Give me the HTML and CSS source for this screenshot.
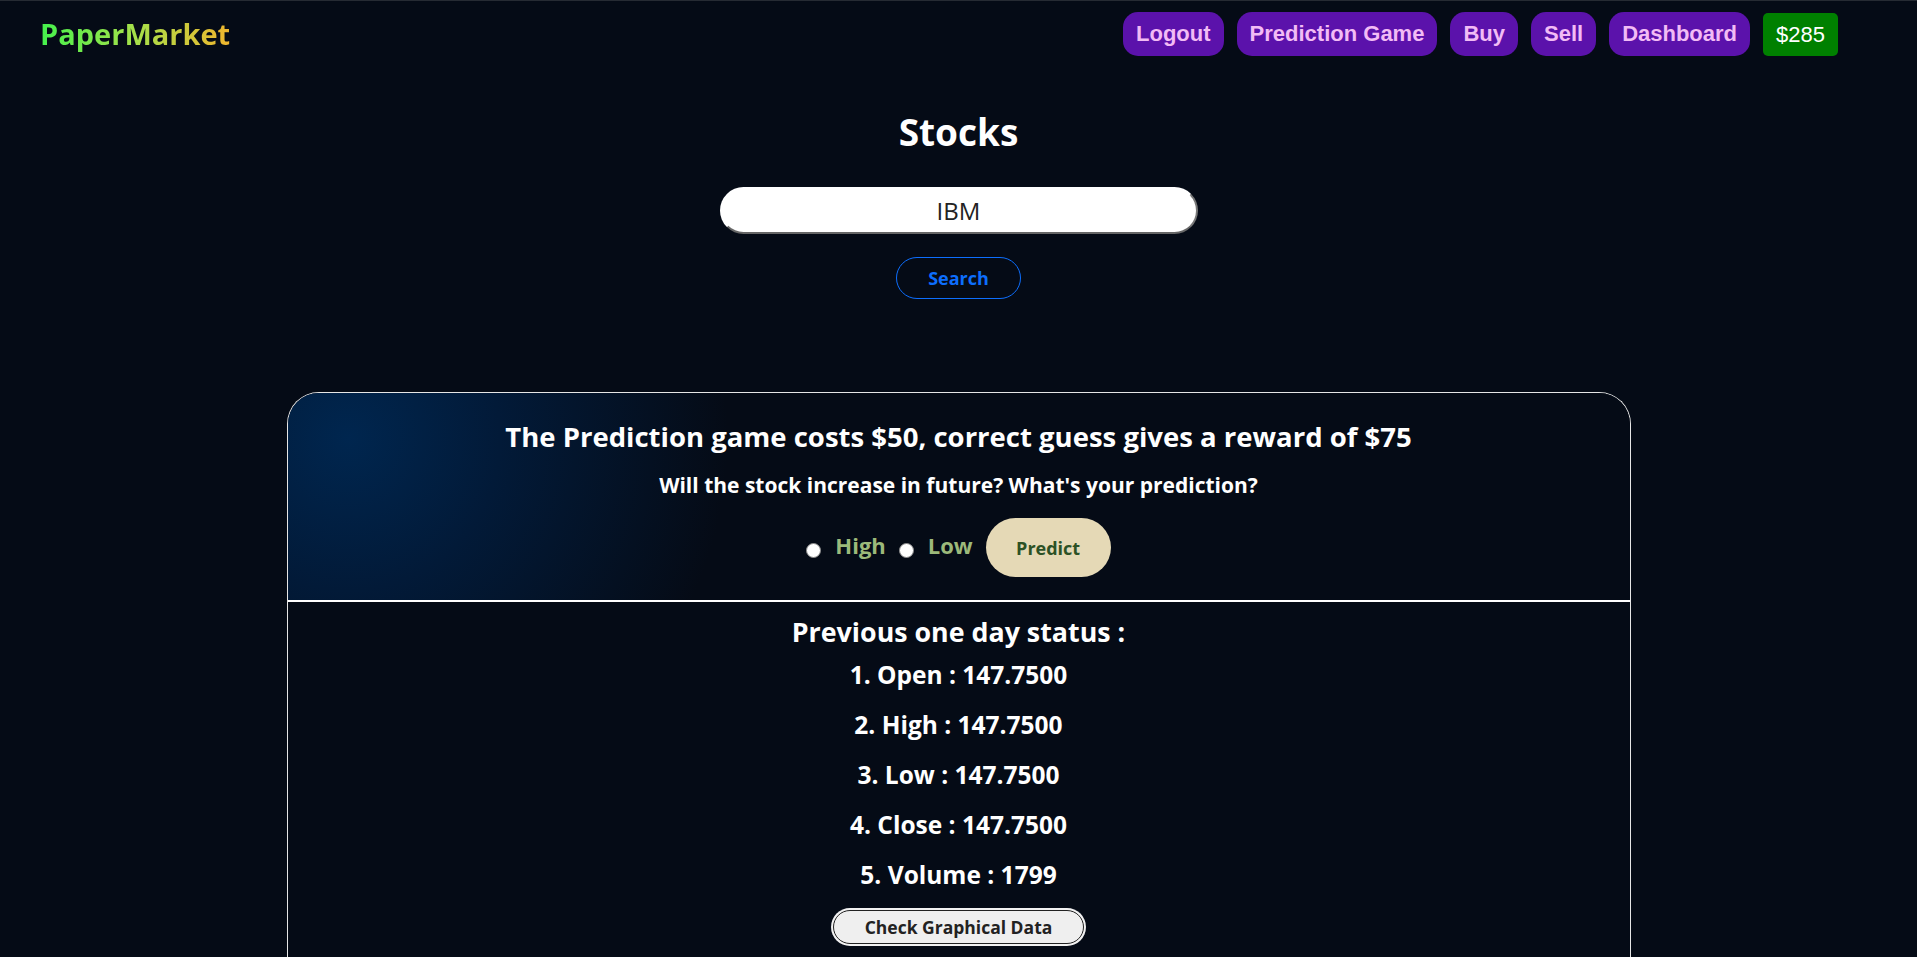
FILE: index.html
```html
<!DOCTYPE html>
<html lang="en">
<head>
<meta charset="utf-8">
<title>PaperMarket</title>
<link rel="stylesheet" href="styles.css">
</head>
<body>
<nav class="topbar">
  <div class="logo">PaperMarket</div>
  <div class="navlinks">
    <button class="navbtn">Logout</button>
    <button class="navbtn">Prediction Game</button>
    <button class="navbtn">Buy</button>
    <button class="navbtn">Sell</button>
    <button class="navbtn">Dashboard</button>
    <span class="balance">$285</span>
  </div>
</nav>
<main class="main">
  <h1 class="title">Stocks</h1>
  <input class="search-input" type="text" value="IBM">
  <button class="search-btn">Search</button>
  <section class="card">
    <div class="card-head">
      <h2 class="game-title">The Prediction game costs $50, correct guess gives a reward of $75</h2>
      <h3 class="game-q">Will the stock increase in future? What's your prediction?</h3>
      <div class="choice-row">
        <input class="radio" type="radio" name="p" id="hi">
        <label class="choice" for="hi">High</label>
        <input class="radio" type="radio" name="p" id="lo">
        <label class="choice" for="lo">Low</label>
        <button class="predict-btn">Predict</button>
      </div>
    </div>
    <div class="card-body">
      <h2 class="status-title">Previous one day status :</h2>
      <p class="stat">1. Open : 147.7500</p>
      <p class="stat">2. High : 147.7500</p>
      <p class="stat">3. Low : 147.7500</p>
      <p class="stat">4. Close : 147.7500</p>
      <p class="stat">5. Volume : 1799</p>
      <button class="graph-btn">Check Graphical Data</button>
    </div>
  </section>
</main>
</body>
</html>
```
FILE: styles.css
```css
* { box-sizing: border-box; }
html, body { margin: 0; padding: 0; }
body {
  background: #050b16;
  border-top: 1px solid #262b33;
  font-family: "Open Sans", "Noto Sans", sans-serif;
  color: #fff;
  min-height: 957px;
}
.topbar {
  display: flex;
  justify-content: space-between;
  align-items: center;
  padding: 11px 79px 0 40px;
}
.logo {
  font-family: "Open Sans", sans-serif;
  font-weight: 700;
  font-size: 29px;
  line-height: 44px;
  background: linear-gradient(90deg, #44f24c 0%, #a6e04a 50%, #f0b62e 100%);
  -webkit-background-clip: text;
  background-clip: text;
  color: transparent;
}
.navlinks {
  display: flex;
  gap: 13px;
  align-items: center;
}
.navbtn {
  font-family: "Liberation Sans", Arial, sans-serif;
  font-weight: 700;
  font-size: 22px;
  height: 44px;
  padding: 0 13px;
  border: none;
  border-radius: 15px;
  background: #5b12ab;
  color: #f2bbf5;
}
.balance {
  font-family: "Liberation Sans", Arial, sans-serif;
  font-size: 22px;
  height: 43px;
  line-height: 43px;
  padding: 0 13px;
  border-radius: 5px;
  background: #008000;
  color: #fff;
}
.main {
  display: flex;
  flex-direction: column;
  align-items: center;
}
.title {
  margin: 53px 0 0;
  font-size: 37px;
  line-height: 46px;
  font-weight: 700;
}
.search-input {
  margin-top: 32px;
  width: 478px;
  height: 47px;
  border-radius: 24px;
  border: 2px solid #fff;
  border-right-color: #777;
  border-bottom-color: #666;
  background: #fff;
  text-align: center;
  font-family: "Open Sans", sans-serif;
  font-size: 24px;
  color: #222;
  outline: none;
}
.search-btn {
  margin-top: 23px;
  width: 125px;
  height: 42px;
  border-radius: 21px;
  border: 1px solid #0d6efd;
  background: transparent;
  color: #0d6efd;
  font-family: "Open Sans", sans-serif;
  font-weight: 700;
  font-size: 18px;
}
.card {
  margin-top: 93px;
  width: 1344px;
  border: 1px solid #e6e6e6;
  border-bottom: none;
  border-radius: 32px 32px 0 0;
  min-height: 600px;
}
.card-head {
  height: 209px;
  border-radius: 31px 31px 0 0;
  border-bottom: 2px solid #fff;
  background: radial-gradient(circle 380px at 60px 45px, #00264f 0%, #021a38 40%, #050b16 100%);
  display: flex;
  flex-direction: column;
  align-items: center;
  padding-top: 25px;
}
.game-title {
  margin: 0;
  font-size: 27.5px;
  line-height: 38px;
  font-weight: 700;
}
.game-q {
  margin: 15px 0 0;
  font-size: 21px;
  line-height: 28px;
  font-weight: 700;
}
.choice-row {
  margin-top: 19px;
  display: flex;
  align-items: center;
  gap: 13px;
}
.radio {
  appearance: none;
  -webkit-appearance: none;
  margin: 6px 1px 0 0;
  width: 15px;
  height: 15px;
  border-radius: 50%;
  background: #fff;
  border: 1px solid #8a8a8a;
}
.choice {
  font-size: 22px;
  font-weight: 700;
  color: #9cb97a;
  line-height: 30px;
  margin-top: -6px;
}
.predict-btn {
  width: 125px;
  height: 59px;
  border-radius: 30px;
  border: none;
  background: #e5d9b6;
  color: #2c5125;
  font-family: "Open Sans", sans-serif;
  font-weight: 700;
  font-size: 18px;
}
.card-body {
  display: flex;
  flex-direction: column;
  align-items: center;
  padding-top: 12px;
}
.status-title {
  margin: 0;
  font-size: 26.8px;
  line-height: 36px;
  font-weight: 700;
}
.stat {
  margin: 0;
  font-size: 24.5px;
  line-height: 50px;
  font-weight: 700;
}
.graph-btn {
  margin-top: 10px;
  width: 251px;
  height: 34px;
  border-radius: 17px;
  border: 1.5px solid #222;
  box-shadow: 0 0 0 2px #f2f2f2;
  background: #efefef;
  color: #222;
  font-family: "Open Sans", sans-serif;
  font-weight: 700;
  font-size: 17.5px;
}
```
